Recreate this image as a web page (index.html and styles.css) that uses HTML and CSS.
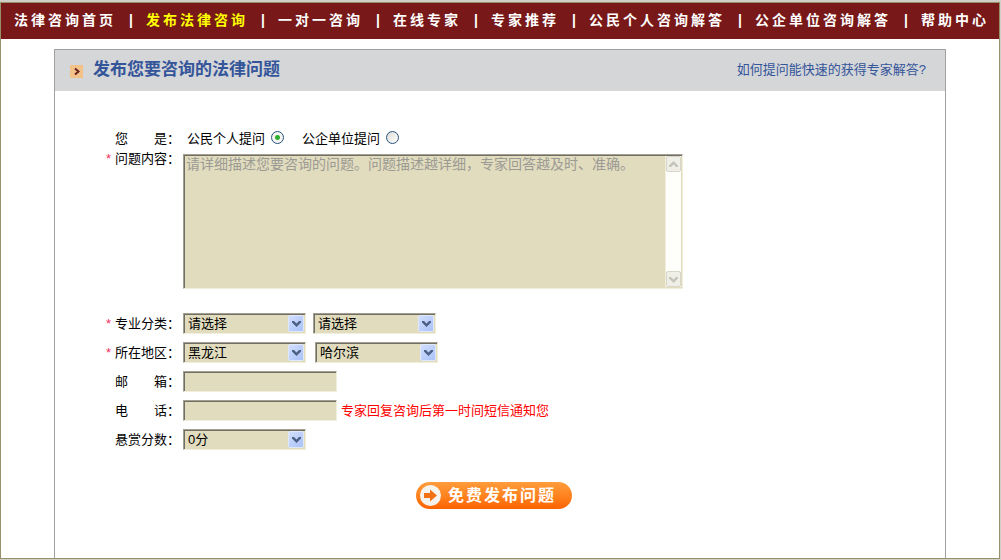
FILE: index.html
```html
<!DOCTYPE html>
<html lang="zh-CN">
<head>
<meta charset="utf-8">
<title>发布法律咨询</title>
<link rel="stylesheet" href="styles.css">
</head>
<body>
<svg class="defs" aria-hidden="true">
  <symbol id="chevron" viewBox="0 0 9 7"><path d="M0 1h2l2.500 2.500L7 1h2v1.500L4.500 7 0 2.500z"/></symbol>
</svg>
<div class="frame">
  <nav class="nav">
    <a href="#">法律咨询首页</a><span class="sep">|</span>
    <a href="#" class="current">发布法律咨询</a><span class="sep">|</span>
    <a href="#">一对一咨询</a><span class="sep">|</span>
    <a href="#">在线专家</a><span class="sep">|</span>
    <a href="#">专家推荐</a><span class="sep">|</span>
    <a href="#">公民个人咨询解答</a><span class="sep">|</span>
    <a href="#">公企单位咨询解答</a><span class="sep">|</span>
    <a href="#">帮助中心</a>
  </nav>
  <main class="panel">
    <header class="panel-head">
      <svg class="marker" viewBox="0 0 13 13" aria-hidden="true"><rect width="13" height="13" fill="#f2c288"/><path d="M5 3.500l3.500 3L5 9.500" fill="none" stroke="#6b2020" stroke-width="2"/></svg>
      <h1>发布您要咨询的法律问题</h1>
      <a href="#" class="tip">如何提问能快速的获得专家解答?</a>
    </header>
    <form class="form">
      <div class="row row-who">
        <span class="label"><span class="spread"><span>您</span><span>是</span></span>：</span>
        <div class="choices">
          <label>公民个人提问<input class="radio" type="radio" name="who" checked></label>
          <label>公企单位提问<input class="radio" type="radio" name="who"></label>
        </div>
      </div>
      <div class="row row-content">
        <label class="label" for="content"><i class="star">*</i>问题内容：</label>
        <div class="area">
          <textarea id="content" placeholder="请详细描述您要咨询的问题。问题描述越详细，专家回答越及时、准确。"></textarea>
          <div class="scrollbar" aria-hidden="true">
            <span class="scroll-btn"><svg class="up"><use href="#chevron"/></svg></span>
            <span class="scroll-btn"><svg><use href="#chevron"/></svg></span>
          </div>
        </div>
      </div>
      <div class="row">
        <label class="label" for="kind"><i class="star">*</i>专业分类：</label>
        <div class="fields">
          <span class="select"><select id="kind"><option>请选择</option></select><span class="drop"><svg><use href="#chevron"/></svg></span></span>
          <span class="select"><select aria-label="专业子类"><option>请选择</option></select><span class="drop"><svg><use href="#chevron"/></svg></span></span>
        </div>
      </div>
      <div class="row">
        <label class="label" for="province"><i class="star">*</i>所在地区：</label>
        <div class="fields fields-region">
          <span class="select"><select id="province"><option>黑龙江</option></select><span class="drop"><svg><use href="#chevron"/></svg></span></span>
          <span class="select"><select aria-label="城市"><option>哈尔滨</option></select><span class="drop"><svg><use href="#chevron"/></svg></span></span>
        </div>
      </div>
      <div class="row">
        <label class="label" for="mail"><span class="spread"><span>邮</span><span>箱</span></span>：</label>
        <input class="text" id="mail" type="text">
      </div>
      <div class="row">
        <label class="label" for="phone"><span class="spread"><span>电</span><span>话</span></span>：</label>
        <input class="text" id="phone" type="text"><span class="note">专家回复咨询后第一时间短信通知您</span>
      </div>
      <div class="row">
        <label class="label" for="score">悬赏分数：</label>
        <span class="select"><select id="score"><option>0分</option></select><span class="drop"><svg><use href="#chevron"/></svg></span></span>
      </div>
      <button class="submit" type="submit">
        <svg viewBox="0 0 21 21" aria-hidden="true"><circle cx="10.500" cy="10.500" r="10.500" fill="#f6f3ee"/><path d="M4 8h6V4.500l7 6-7 6V13H4z" fill="#f37012"/></svg>
        <span>免费发布问题</span>
      </button>
    </form>
  </main>
</div>
</body>
</html>
```
FILE: styles.css
```css
* { box-sizing: border-box; }

body {
  margin: 0;
  min-height: 100vh;
  display: flex;
  padding: 2px 1px 1px 0;
  background: #d0cfc8;
  color: #000;
  font: 13px/20px "Liberation Sans", "Noto Sans CJK SC", sans-serif;
}

a { color: inherit; text-decoration: none; }

.defs { position: absolute; width: 0; height: 0; }

.frame {
  flex: 1;
  display: flex;
  flex-direction: column;
  border: 1px solid #979068;
  background: #fff;
}

.nav {
  display: flex;
  align-items: center;
  height: 36px;
  padding: 0 8px 2px 13px;
  background: #781818;
  color: #fff;
  font-size: 14px;
  font-weight: bold;
  letter-spacing: 3px;
  white-space: nowrap;
}

.nav .current { color: #ff0; }
.sep { width: 30px; padding-left: 3px; text-align: center; }

.panel {
  flex: 1;
  margin: 10px 53px 0;
  border: 1px solid #a0a0a0;
  border-bottom: 0;
}

.panel-head {
  display: flex;
  align-items: center;
  height: 41px;
  padding: 0 19px 2px 15px;
  background: #d4d6d8;
  color: #34559a;
}

.marker { width: 13px; height: 13px; margin: 4px 10px 0 0; }
.panel-head h1 { margin: 0; font-size: 17px; line-height: 24px; }
.tip { margin-left: auto; }

.form { padding: 38px 50px 40px; }

.row {
  display: flex;
  align-items: center;
  height: 21px;
  margin-bottom: 8px;
}

.row-who { height: 20px; margin-bottom: 5px; }
.row-content { height: auto; align-items: flex-start; margin-bottom: 24px; }

.label {
  display: flex;
  justify-content: flex-end;
  flex: none;
  width: 75px;
  margin-right: 3px;
}

.row-content .label { margin-top: -5px; }
.star { margin-right: 4px; color: #f03060; font-style: normal; }
.spread { display: flex; justify-content: space-between; width: 52px; }

.choices { display: flex; gap: 18px; padding-left: 4px; }
.choices label { display: flex; align-items: center; gap: 6px; }

.radio {
  appearance: none;
  width: 13px;
  height: 13px;
  margin: 0 0 3px;
  border: 1px solid #28527e;
  border-radius: 50%;
  background: linear-gradient(135deg, #dcdcd6, #fff);
}

.radio:checked { background: radial-gradient(circle, #2fae2f 0 2px, #f4f4f0 3px); }

.area, .select, .text {
  border: 1px solid;
  border-color: #a3a093 #f1eede #f1eede #a3a093;
  background: #e1dcbe;
  box-shadow: inset 1px 1px #716f64;
}

.area { display: flex; width: 500px; height: 135px; padding: 1px; }

.area textarea {
  flex: 1;
  min-width: 0;
  padding: 0 1px;
  border: 0;
  outline: 0;
  resize: none;
  overflow: hidden;
  background: transparent;
  font: 14px/17px "Liberation Sans", "Noto Sans CJK SC", sans-serif;
}

.area textarea::placeholder { color: #9c9a94; opacity: 1; }

.scrollbar {
  display: flex;
  flex-direction: column;
  justify-content: space-between;
  width: 16px;
  border-left: 1px solid #f1eede;
  background: #fefefa;
}

.scroll-btn {
  display: grid;
  place-items: center;
  height: 16px;
  border: 1px solid #d8d6ca;
  border-radius: 2px;
  background: #efeee7;
}

.scroll-btn svg { width: 9px; height: 7px; fill: #c6c4b8; }
.scroll-btn .up { transform: rotate(180deg); }

.fields { display: flex; gap: 7px; }
.fields-region { gap: 9px; }

.select { display: flex; width: 123px; height: 21px; padding: 1px; }

.select select {
  appearance: none;
  flex: 1;
  min-width: 0;
  padding: 0 3px;
  border: 0;
  background: transparent;
  color: #000;
  font: inherit;
  line-height: 17px;
}

.drop {
  display: grid;
  place-items: center;
  width: 16px;
  border: 1px solid #dfe8fb;
  border-radius: 2px;
  background: linear-gradient(135deg, #d2defd, #a9c2f8);
}

.drop svg { width: 9px; height: 7px; fill: #4d6185; }

.text { width: 154px; height: 21px; padding: 1px 3px; font: inherit; }
.note { margin-left: 4px; color: #f00; }

.submit {
  display: flex;
  align-items: center;
  width: 156px;
  height: 27px;
  margin: 32px 0 0 311px;
  padding: 0 5px 0 4px;
  border: 0;
  border-radius: 14px;
  background: linear-gradient(#ff9c3c, #ff8420 50%, #fb6200);
  color: #fff;
  font: bold 16px/24px "Liberation Sans", "Noto Sans CJK SC", sans-serif;
  letter-spacing: 2px;
  white-space: nowrap;
}

.submit svg { flex: none; width: 21px; height: 21px; margin-right: 7px; }
```
